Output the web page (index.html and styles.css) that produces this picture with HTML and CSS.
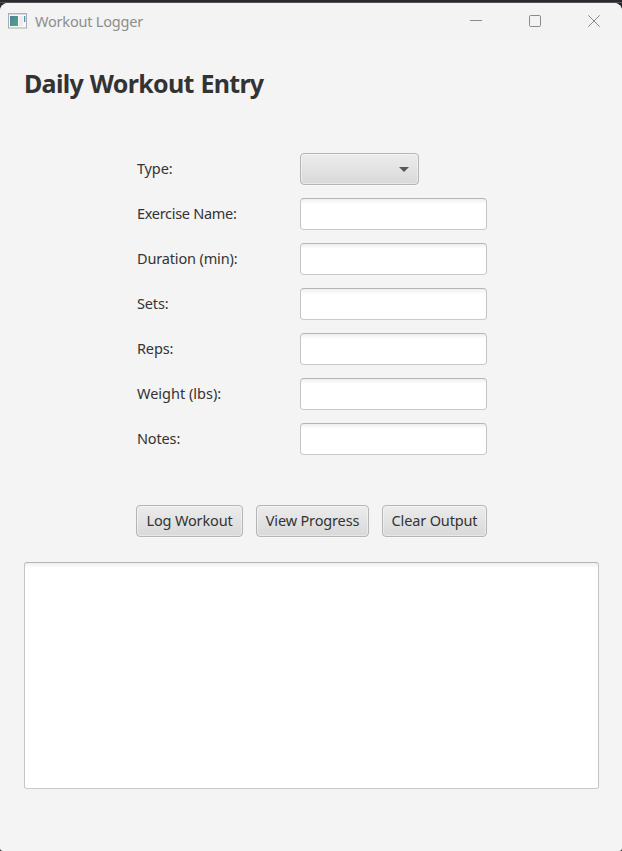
FILE: index.html
```html
<!DOCTYPE html>
<html lang="en">
<head>
<meta charset="utf-8">
<title>Workout Logger</title>
<link rel="stylesheet" href="styles.css">
</head>
<body>
<div class="window">
  <header class="titlebar">
    <svg class="app-icon" width="19" height="16" viewBox="0 0 19 16">
      <defs><linearGradient id="g" x1="0" y1="0" x2="1" y2="1"><stop offset="0" stop-color="#4a7fa3"/><stop offset="1" stop-color="#55a878"/></linearGradient></defs>
      <rect x=".5" y=".5" width="18" height="14.5" fill="#f8f8f8" stroke="#a9adb2"/>
      <path d="M1 1h17" stroke="#b4bac2"/>
      <rect x="2" y="3" width="8" height="10" fill="url(#g)"/>
      <rect x="11" y="3" width="4" height="10" fill="#ececee"/>
      <rect x="16" y="3" width="1.3" height="6" fill="#5795ae"/>
    </svg>
    <span class="caption">Workout Logger</span>
    <div class="controls">
      <svg width="13" height="12" viewBox="0 0 13 12"><path d="M1 5.5h12"/></svg>
      <svg width="12" height="12" viewBox="0 0 12 12"><rect x=".5" y=".5" width="11" height="11" rx="1.2"/></svg>
      <svg width="12" height="12" viewBox="0 0 12 12"><path d="M.3.3l11.4 11.4M11.7.3L.3 11.7"/></svg>
    </div>
  </header>
  <main class="content">
    <h1>Daily Workout Entry</h1>
    <form class="form">
      <label for="type">Type:</label>
      <button type="button" id="type" class="combo" aria-label="Type"><svg width="10" height="5" viewBox="0 0 10 5"><path d="M0 0h10L5 5z"/></svg></button>
      <label for="name" class="l-name">Exercise Name:</label><input id="name">
      <label for="duration">Duration (min):</label><input id="duration">
      <label for="sets">Sets:</label><input id="sets">
      <label for="reps">Reps:</label><input id="reps">
      <label for="weight" class="l-weight">Weight (lbs):</label><input id="weight">
      <label for="notes">Notes:</label><input id="notes">
    </form>
    <div class="actions">
      <button class="log">Log Workout</button>
      <button class="view">View Progress</button>
      <button class="clear">Clear Output</button>
    </div>
    <textarea class="output" readonly aria-label="Output"></textarea>
  </main>
</div>
</body>
</html>
```
FILE: styles.css
```css
* { box-sizing: border-box; }
body {
  margin: 0;
  height: 851px;
  padding-top: 3px;
  background: linear-gradient(#2a292e 0 2px, #535256 2px 3px, #2a292e 3px);
  color: #333;
  font: 14.5px/20px "Noto Sans", sans-serif;
  overflow: hidden;
}
.window {
  height: 848px;
  background: #f4f4f4;
  border-radius: 8px 8px 3px 3px;
  overflow: hidden;
}
.titlebar {
  display: flex;
  height: 37px;
  padding: 0 22px 1px 8px;
  align-items: center;
  background: #f3f3f3;
}
.caption {
  margin-left: 8px;
  letter-spacing: -0.2px;
  color: #8d8d8d;
}
.controls {
  display: flex;
  gap: 47px;
  margin-left: auto;
}
.controls svg {
  fill: none;
  stroke: #8b8b8b;
}
.content { padding: 26px 23px 0 24px; }
h1 {
  margin: 0;
  font-size: 25px;
  line-height: 34px;
  letter-spacing: -0.7px;
  word-spacing: 1px;
  white-space: nowrap;
}
.form {
  display: grid;
  grid-template-columns: 163px 187px;
  grid-auto-rows: 32px;
  row-gap: 13px;
  align-items: center;
  margin: 53px 0 0 113px;
}
label {
  padding-bottom: 2px;
  letter-spacing: -0.15px;
  white-space: nowrap;
}
.l-name { letter-spacing: -0.3px; }
.l-weight { letter-spacing: 0; }
input, .output {
  display: block;
  width: 100%;
  height: 32px;
  margin: 0;
  border: 1px solid #c8c8c8;
  border-color: #b5b5b5 #c4c4c4 #cacaca;
  border-radius: 4px;
  background: linear-gradient(#eee, #fff 5px);
  outline: 0;
  resize: none;
}
button {
  height: 32px;
  padding: 0 0 2px;
  border: 1px solid #b5b5b5;
  border-radius: 4px;
  background: linear-gradient(#ececec, #d9d9d9);
  box-shadow: inset 0 0 0 1px rgba(255, 255, 255, .4), 0 1px 0 #f8f8f8;
  color: #333;
  font: inherit;
  letter-spacing: -0.15px;
  white-space: nowrap;
}
.combo {
  display: flex;
  width: 119px;
  align-items: center;
  justify-content: flex-end;
  padding: 0 9px 0 0;
}
.combo path { fill: #575757; }
.actions {
  display: flex;
  gap: 13px;
  margin: 50px 0 0 112px;
}
.log { width: 107px; }
.view { width: 113px; }
.clear { width: 105px; }
.output {
  height: 227px;
  margin-top: 25px;
  border-radius: 3px;
}
```
